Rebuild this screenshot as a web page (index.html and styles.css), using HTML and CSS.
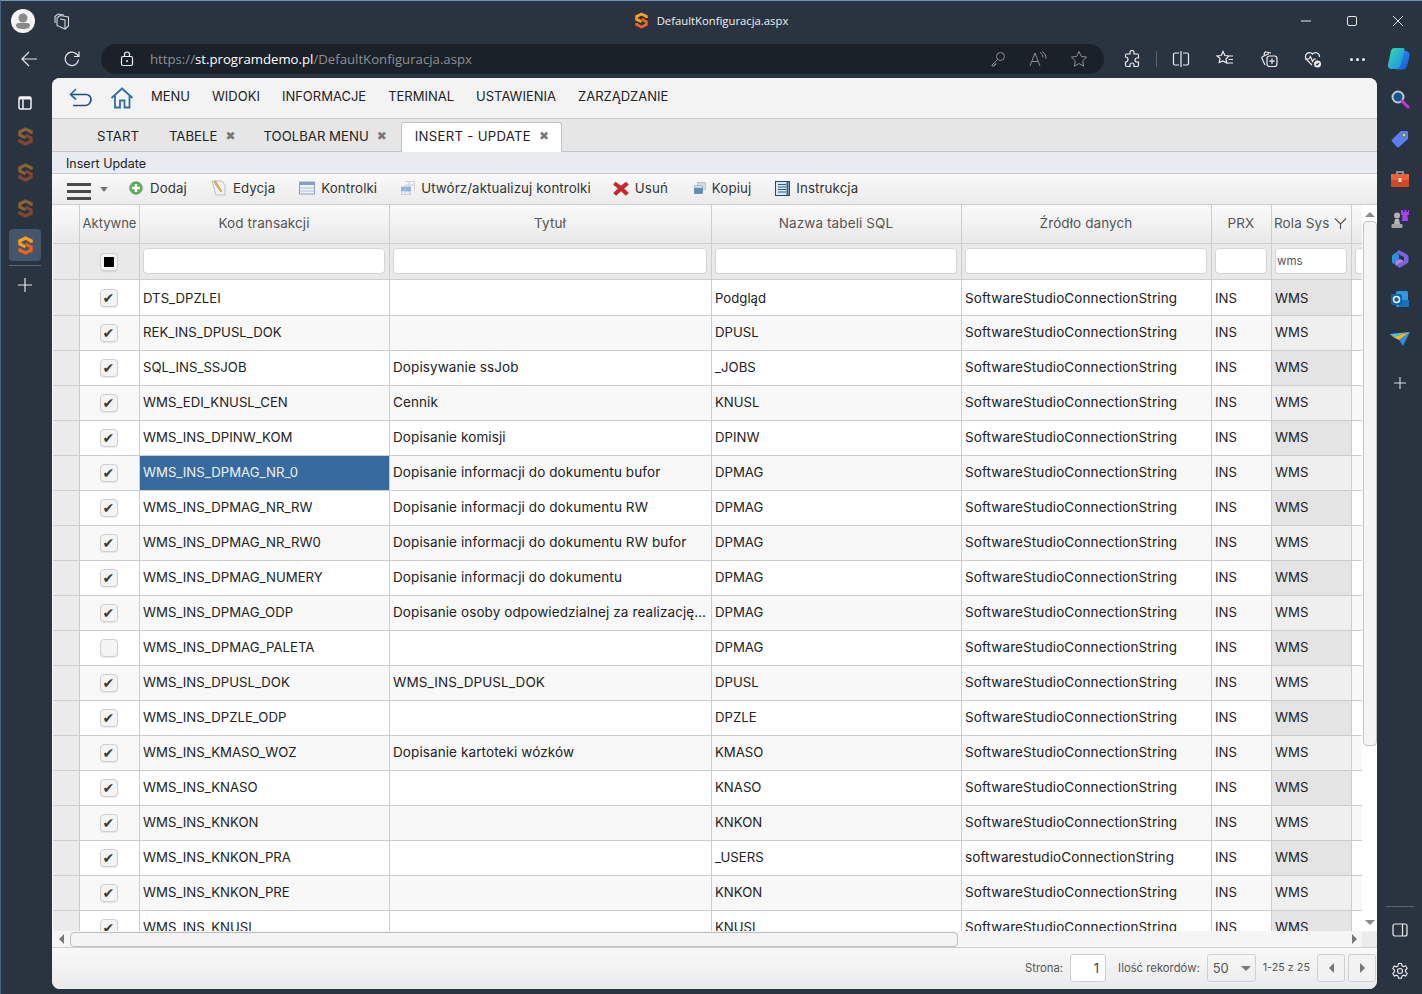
FILE: index.html
```html
<!DOCTYPE html>
<html lang="pl">
<head>
    <meta charset="UTF-8">
    <title>DefaultKonfiguracja.aspx</title>
    <link rel="stylesheet" href="styles.css">
</head>
<body>
    <svg class="defs" width="0" height="0">
        <symbol id="logo" viewBox="0 0 16 20">
            <path d="M14 7V5L8 2 2 5v3.500l6 3" fill="none" stroke="#f7a01d" stroke-width="3.400"/>
            <path d="M2 13v2l6 3 6-3v-3.500l-6-3" fill="none" stroke="#f0601f" stroke-width="3.400"/>
        </symbol>
    </svg>

    <div class="titlebar">
        <div class="title-left">
            <span class="avatar">
                <svg width="32" height="32" viewBox="0 0 32 32"><circle cx="16" cy="16" r="12" fill="#f4f4f4"/><circle cx="16" cy="13" r="4.500" fill="#8a8a8a"/><path d="M9 20.500c0-1.500 1-2.500 2.500-2.500h9c1.500 0 2.500 1 2.500 2.500 0 2.500-3 3.500-7 3.500s-7-1-7-3.500z" fill="#8a8a8a"/></svg>
            </span>
            <svg class="workspaces" width="18" height="18" viewBox="0 0 18 18" fill="none" stroke="#d5d8dc" stroke-width="1.100"><path d="M2 11V4.500L5 2l6 1"/><path d="M4 13.500V6l3-2.500 8.500 1.500v9l-3.500 3z"/><path d="M7 7l5 1v9"/></svg>
        </div>
        <div class="title-center">
            <svg width="13" height="17"><use href="#logo"/></svg>
            <span>DefaultKonfiguracja.aspx</span>
        </div>
        <div class="win-buttons">
            <svg width="12" height="12" viewBox="0 0 12 12"><path d="M1 6h10" stroke="#e8e8e8"/></svg>
            <svg width="12" height="12" viewBox="0 0 12 12"><rect x="1.500" y="1.500" width="9" height="9" rx="1.500" fill="none" stroke="#e8e8e8"/></svg>
            <svg width="12" height="12" viewBox="0 0 12 12"><path d="M1 1l10 10M11 1 1 11" stroke="#e8e8e8"/></svg>
        </div>
    </div>

    <div class="addressrow">
        <svg class="nav-ico" width="18" height="18" viewBox="0 0 18 18" fill="none" stroke="#e6e6e6" stroke-width="1.200"><path d="M17 9H2M9 2 2 9l7 7"/></svg>
        <svg class="nav-ico refresh" width="18" height="18" viewBox="0 0 18 18" fill="none" stroke="#e6e6e6" stroke-width="1.200"><path d="M15.500 9.500A6.700 6.700 0 1 1 13.500 4L16 6.500"/><path d="M16 1.500v5h-5"/></svg>
        <div class="addressbar">
            <svg class="lock" width="14" height="16" viewBox="0 0 14 16" fill="none" stroke="#f0f0f0" stroke-width="1.200"><rect x="1.500" y="5.500" width="11" height="9" rx="1.500"/><path d="M4.500 5.500V3.500a2.500 2.500 0 0 1 5 0v2"/><circle cx="7" cy="10" r="1" fill="#f0f0f0" stroke="none"/></svg>
            <span class="url"><span class="dim">https://</span>st.programdemo.pl<span class="dim">/DefaultKonfiguracja.aspx</span></span>
            <span class="addr-icons">
                <svg width="16" height="16" viewBox="0 0 16 16" fill="none" stroke="#8b8f94"><circle cx="10.500" cy="5.500" r="4"/><path d="M7.500 8.500 2 14v1h2.500v-1.500H6V12"/></svg>
                <svg width="18" height="16" viewBox="0 0 18 16" fill="none" stroke="#8b8f94"><path d="M1 15 6 2l5 13M3 10.500h6"/><path d="M11 1.500c2 1 3 2.500 3 5M13 .5c2.500 1.300 4 3.500 4 7"/></svg>
                <svg width="18" height="18" viewBox="0 0 18 18" fill="none" stroke="#8b8f94"><path d="M9 1.500l2.300 4.900 5.200.7-3.800 3.700.9 5.300L9 13.500l-4.600 2.600.9-5.300L1.500 7.100l5.200-.7z"/></svg>
            </span>
        </div>
        <div class="browser-tools">
            <svg width="18" height="18" viewBox="0 0 18 18" fill="none" stroke="#eee" stroke-width="1.200"><path d="M7 2.500a2 2 0 0 1 4 0V4h3.500a1 1 0 0 1 1 1v3H14a2 2 0 0 0 0 4h1.500v3a1.500 1.500 0 0 1-1.500 1.500h-3V15a2 2 0 0 0-4 0v1.500H4A1.500 1.500 0 0 1 2.500 15v-3a2.500 2.500 0 0 0 0-5V5a1 1 0 0 1 1-1H7z"/></svg>
            <span class="tool-sep"></span>
            <svg width="18" height="18" viewBox="0 0 18 18" fill="none" stroke="#eee" stroke-width="1.200"><path d="M7 3H3a1.500 1.500 0 0 0-1.500 1.500v9A1.500 1.500 0 0 0 3 15h4M11 3h4a1.500 1.500 0 0 1 1.500 1.500v9A1.500 1.500 0 0 1 15 15h-4M9 1v16"/></svg>
            <svg width="18" height="18" viewBox="0 0 18 18" fill="none" stroke="#eee" stroke-width="1.200"><path d="M7 1.500l1.800 4 4.200.5-3 2.900.8 4.200L7 10.900l-3.800 1.700.8-4.200L1 6l4.200-.5zM12 6h5M12.500 9.500H17M11.500 13H17"/></svg>
            <svg width="18" height="18" viewBox="0 0 18 18" fill="none" stroke="#eee" stroke-width="1.200"><path d="M5 15 2 8.500a1.500 1.500 0 0 1 .8-2L9 3.500"/><path d="M4 5 4.500 3a1.500 1.500 0 0 1 1.800-1L11 3"/><rect x="7" y="6" width="10" height="10.500" rx="2.500"/><path d="M12 8.500v5.500M9.300 11.200h5.400"/></svg>
            <svg width="18" height="18" viewBox="0 0 18 18" fill="none" stroke="#eee" stroke-width="1.200"><path d="M8 15 2.500 9.500a4 4 0 0 1 6-5.500 4 4 0 0 1 7 3"/><path d="M1 9h4l1.500-2.500 2 5L10 9h2"/><circle cx="13.500" cy="14" r="3.500" fill="#eee" stroke="none"/><path d="M12 14l1 1 2-2" stroke="#2a3442"/></svg>
            <span class="more"><i></i><i></i><i></i></span>
            <svg class="copilot" width="24" height="24" viewBox="0 0 24 24"><defs><linearGradient id="cpa" x1="0" y1="0" x2="1" y2="1"><stop offset="0" stop-color="#35dcae"/><stop offset="1" stop-color="#1a8ae8"/></linearGradient><linearGradient id="cpb" x1="0" y1="0" x2="1" y2="1"><stop offset="0" stop-color="#2a9df4"/><stop offset="1" stop-color="#1555d0"/></linearGradient></defs><path d="M15 4h3c3 0 5 2 4.500 5l-2 9c-.5 2.500-2 4.500-5 4.500h-7c2 0 3-1.500 3.500-3z" fill="url(#cpb)"/><path d="M7 1h9c1.500 0 2 1 1.500 2L13 19c-.5 2-2 3-4 3H5c-3 0-4.500-2-4-4.500L3.500 6C4 3 5 1 7 1z" fill="url(#cpa)"/></svg>
        </div>
    </div>

    <div class="main">
        <aside class="leftrail">
            <svg class="rail-ico" width="16" height="16" viewBox="0 0 16 16" fill="none" stroke="#f2f2f2" stroke-width="1.500"><rect x="2" y="2" width="12" height="12" rx="1.500"/><path d="M6 4.500V14"/><path d="M2 2h12v2.500H2z" fill="#f2f2f2" stroke="none"/></svg>
            <svg class="rail-logo dim-logo" width="15" height="19"><use href="#logo"/></svg>
            <svg class="rail-logo dim-logo" width="15" height="19"><use href="#logo"/></svg>
            <svg class="rail-logo dim-logo" width="15" height="19"><use href="#logo"/></svg>
            <span class="rail-active"><svg width="15" height="19"><use href="#logo"/></svg></span>
            <span class="rail-sep"></span>
            <svg class="rail-plus" width="16" height="16" viewBox="0 0 16 16"><path d="M8 1v14M1 8h14" stroke="#e6e6e6" stroke-width="1.200"/></svg>
        </aside>

        <div class="card">
            <nav class="menubar">
                <svg class="back-ico" width="24" height="20" viewBox="0 0 24 20" fill="none" stroke="#2f6ea5" stroke-width="1.700"><path d="M7 1 1.500 6.500 7 11.500"/><path d="M2 6.500h15a5 5 0 0 1 5 5v0a6 6 0 0 1-6 6H4" stroke="#1f4f7d"/></svg>
                <svg class="home-ico" width="24" height="22" viewBox="0 0 24 22" fill="none" stroke="#2f6ea5" stroke-width="1.800"><path d="M1.500 11 12 1.500 22.500 11M5 8.500V20.500h5v-7h4.500v7H19.500V8.500"/></svg>
                <a>MENU</a><a>WIDOKI</a><a>INFORMACJE</a><a>TERMINAL</a><a>USTAWIENIA</a><a>ZARZĄDZANIE</a>
            </nav>

            <div class="tabs">
                <span class="tab tab-start">START</span>
                <span class="tab">TABELE <b class="x">✖</b></span>
                <span class="tab">TOOLBAR MENU <b class="x">✖</b></span>
                <span class="tab active">INSERT - UPDATE <b class="x">✖</b></span>
            </div>

            <div class="crumb">Insert Update</div>

            <div class="toolbar">
                <span class="burger"><i></i><i></i><i></i></span>
                <span class="caret"></span>
                <button class="tool tool-add"><svg width="14" height="14" viewBox="0 0 14 14"><circle cx="7" cy="7" r="6.500" fill="#62ad5c" stroke="#8a9c88" stroke-width=".6"/><path d="M7 3v8M3 7h8" stroke="#fff" stroke-width="2.400"/></svg>Dodaj</button>
                <button class="tool"><svg width="16" height="16" viewBox="0 0 16 16"><path d="M1 1h10l3 4v10H5z" fill="#f1f3f5" stroke="#a9b2b8" stroke-width=".8"/><path d="M3 2l6 9 1.500 1-.3-2L4.500 1z" fill="#e9b93c" stroke="#a0782a" stroke-width=".5"/></svg>Edycja</button>
                <button class="tool"><svg width="16" height="14" viewBox="0 0 16 14"><rect x=".5" y="1" width="15" height="12" fill="#eef3f8" stroke="#8ba3bc"/><rect x=".5" y="1" width="15" height="3" fill="#7fa1c8"/><path d="M1 7h14M1 10h14" stroke="#a9c0da"/></svg>Kontrolki</button>
                <button class="tool tool-gen"><svg width="14" height="14" viewBox="0 0 14 14" fill="none" stroke="#c0ccd8" stroke-width=".8"><path d="M4 .5h9.500V10M4 4h9.500M8 .5V13M.5 7h9"/><rect x=".5" y="6" width="9" height="4" fill="#8fb2e0" stroke="#8fb2e0"/><path d="M.5 10v3.500h9V10M4 4v9.500"/></svg>Utwórz/aktualizuj kontrolki</button>
                <button class="tool tool-del"><svg width="16" height="15" viewBox="0 0 16 15"><path d="M2.500 1 8 5l5-4 2.500 2.500L11 7.500l4.500 4.500-2.500 2.500L8 10l-5 4.500L.5 12 5 7.500.5 3.500z" fill="#d3232a" stroke="#8f1d1d" stroke-width=".4"/></svg>Usuń</button>
                <button class="tool"><svg width="12" height="12" viewBox="0 0 12 12"><rect x="3.500" y=".5" width="8" height="7" fill="#d5dde6" stroke="#9fb0c0" stroke-width=".6"/><rect x=".5" y="4" width="8" height="7.500" fill="#5d8fb8" stroke="#4a7396" stroke-width=".6"/><rect x=".5" y="4" width="8" height="2" fill="#c8d8e6"/></svg>Kopiuj</button>
                <button class="tool"><svg width="15" height="15" viewBox="0 0 15 15"><rect x=".5" y=".5" width="14" height="14" fill="#dbe6f0" stroke="#1f4c6e"/><path d="M3 3.500h8M3 6h8M3 8.500h8M3 11h8" stroke="#2d5f86"/><path d="M12.500 1v13" stroke="#2d5f86" stroke-width="2"/></svg>Instrukcja</button>
            </div>

            <div class="gridarea">
                <div class="gridview">
                    <table class="grid">
                        <colgroup>
                            <col class="c-ind"><col class="c-act"><col class="c-kod"><col class="c-tyt"><col class="c-tab"><col class="c-zrd"><col class="c-prx"><col class="c-rol"><col class="c-ext">
                        </colgroup>
                        <thead>
                            <tr class="head">
                                <th></th><th class="nowrap">Aktywne</th><th>Kod transakcji</th><th>Tytuł</th><th>Nazwa tabeli SQL</th><th>Źródło danych</th><th>PRX</th>
                                <th class="rola"><span>Rola Sys</span><svg width="13" height="13" viewBox="0 0 13 13" fill="none" stroke="#555" stroke-width="1.200"><path d="M1 1.500 6.500 7 12 1.500M6.500 7v5"/></svg></th>
                                <th></th>
                            </tr>
                            <tr class="filter">
                                <td></td>
                                <td class="cc"><span class="chk chk-some"><i></i></span></td>
                                <td><input type="text"></td><td><input type="text"></td><td><input type="text"></td><td><input type="text"></td><td><input type="text"></td>
                                <td><input type="text" value="wms"></td>
                                <td><input type="text"></td>
                            </tr>
                        </thead>
                        <tbody>
                            <tr><td class="ind"></td><td class="cc"><span class="chk">✔</span></td><td>DTS_DPZLEI</td><td></td><td>Podgląd</td><td>SoftwareStudioConnectionString</td><td>INS</td><td class="ro">WMS</td><td></td></tr>
                            <tr><td class="ind"></td><td class="cc"><span class="chk">✔</span></td><td>REK_INS_DPUSL_DOK</td><td></td><td>DPUSL</td><td>SoftwareStudioConnectionString</td><td>INS</td><td class="ro">WMS</td><td></td></tr>
                            <tr><td class="ind"></td><td class="cc"><span class="chk">✔</span></td><td>SQL_INS_SSJOB</td><td>Dopisywanie ssJob</td><td>_JOBS</td><td>SoftwareStudioConnectionString</td><td>INS</td><td class="ro">WMS</td><td></td></tr>
                            <tr><td class="ind"></td><td class="cc"><span class="chk">✔</span></td><td>WMS_EDI_KNUSL_CEN</td><td>Cennik</td><td>KNUSL</td><td>SoftwareStudioConnectionString</td><td>INS</td><td class="ro">WMS</td><td></td></tr>
                            <tr><td class="ind"></td><td class="cc"><span class="chk">✔</span></td><td>WMS_INS_DPINW_KOM</td><td>Dopisanie komisji</td><td>DPINW</td><td>SoftwareStudioConnectionString</td><td>INS</td><td class="ro">WMS</td><td></td></tr>
                            <tr><td class="ind"></td><td class="cc"><span class="chk">✔</span></td><td class="selected">WMS_INS_DPMAG_NR_0</td><td>Dopisanie informacji do dokumentu bufor</td><td>DPMAG</td><td>SoftwareStudioConnectionString</td><td>INS</td><td class="ro">WMS</td><td></td></tr>
                            <tr><td class="ind"></td><td class="cc"><span class="chk">✔</span></td><td>WMS_INS_DPMAG_NR_RW</td><td>Dopisanie informacji do dokumentu RW</td><td>DPMAG</td><td>SoftwareStudioConnectionString</td><td>INS</td><td class="ro">WMS</td><td></td></tr>
                            <tr><td class="ind"></td><td class="cc"><span class="chk">✔</span></td><td>WMS_INS_DPMAG_NR_RW0</td><td>Dopisanie informacji do dokumentu RW bufor</td><td>DPMAG</td><td>SoftwareStudioConnectionString</td><td>INS</td><td class="ro">WMS</td><td></td></tr>
                            <tr><td class="ind"></td><td class="cc"><span class="chk">✔</span></td><td>WMS_INS_DPMAG_NUMERY</td><td>Dopisanie informacji do dokumentu</td><td>DPMAG</td><td>SoftwareStudioConnectionString</td><td>INS</td><td class="ro">WMS</td><td></td></tr>
                            <tr><td class="ind"></td><td class="cc"><span class="chk">✔</span></td><td>WMS_INS_DPMAG_ODP</td><td>Dopisanie osoby odpowiedzialnej za realizację zlecenia</td><td>DPMAG</td><td>SoftwareStudioConnectionString</td><td>INS</td><td class="ro">WMS</td><td></td></tr>
                            <tr><td class="ind"></td><td class="cc"><span class="chk"></span></td><td>WMS_INS_DPMAG_PALETA</td><td></td><td>DPMAG</td><td>SoftwareStudioConnectionString</td><td>INS</td><td class="ro">WMS</td><td></td></tr>
                            <tr><td class="ind"></td><td class="cc"><span class="chk">✔</span></td><td>WMS_INS_DPUSL_DOK</td><td>WMS_INS_DPUSL_DOK</td><td>DPUSL</td><td>SoftwareStudioConnectionString</td><td>INS</td><td class="ro">WMS</td><td></td></tr>
                            <tr><td class="ind"></td><td class="cc"><span class="chk">✔</span></td><td>WMS_INS_DPZLE_ODP</td><td></td><td>DPZLE</td><td>SoftwareStudioConnectionString</td><td>INS</td><td class="ro">WMS</td><td></td></tr>
                            <tr><td class="ind"></td><td class="cc"><span class="chk">✔</span></td><td>WMS_INS_KMASO_WOZ</td><td>Dopisanie kartoteki wózków</td><td>KMASO</td><td>SoftwareStudioConnectionString</td><td>INS</td><td class="ro">WMS</td><td></td></tr>
                            <tr><td class="ind"></td><td class="cc"><span class="chk">✔</span></td><td>WMS_INS_KNASO</td><td></td><td>KNASO</td><td>SoftwareStudioConnectionString</td><td>INS</td><td class="ro">WMS</td><td></td></tr>
                            <tr><td class="ind"></td><td class="cc"><span class="chk">✔</span></td><td>WMS_INS_KNKON</td><td></td><td>KNKON</td><td>SoftwareStudioConnectionString</td><td>INS</td><td class="ro">WMS</td><td></td></tr>
                            <tr><td class="ind"></td><td class="cc"><span class="chk">✔</span></td><td>WMS_INS_KNKON_PRA</td><td></td><td>_USERS</td><td>softwarestudioConnectionString</td><td>INS</td><td class="ro">WMS</td><td></td></tr>
                            <tr><td class="ind"></td><td class="cc"><span class="chk">✔</span></td><td>WMS_INS_KNKON_PRE</td><td></td><td>KNKON</td><td>SoftwareStudioConnectionString</td><td>INS</td><td class="ro">WMS</td><td></td></tr>
                            <tr><td class="ind"></td><td class="cc"><span class="chk">✔</span></td><td>WMS_INS_KNUSL</td><td></td><td>KNUSL</td><td>SoftwareStudioConnectionString</td><td>INS</td><td class="ro">WMS</td><td></td></tr>
                        </tbody>
                    </table>
                </div>
                <div class="vscroll">
                    <span class="arrow-up"></span>
                    <span class="vthumb"></span>
                    <span class="arrow-down"></span>
                </div>
            </div>

            <div class="hscroll">
                <span class="arrow-left"></span>
                <span class="hthumb"></span>
                <span class="arrow-right"></span>
                <span class="corner"></span>
            </div>

            <div class="pager">
                <label>Strona:</label>
                <input class="page-input" type="text" value="1">
                <label class="recs">Ilość rekordów:</label>
                <span class="page-size">50<i></i></span>
                <span class="range">1-25 z 25</span>
                <button class="page-btn"><span class="arrow-left"></span></button>
                <button class="page-btn"><span class="arrow-right"></span></button>
            </div>
        </div>

        <aside class="rightrail">
            <svg width="20" height="20" viewBox="0 0 20 20" fill="none"><circle cx="8" cy="8" r="5.500" fill="#14568f" stroke="#bfc6cc" stroke-width="2"/><path d="M12 12l6 6" stroke="#c238d8" stroke-width="3" stroke-linecap="round"/></svg>
            <svg width="20" height="20" viewBox="0 0 20 20"><path d="M11 2h6a1 1 0 0 1 1 1v7l-9 8a1.500 1.500 0 0 1-2 0L2 12.500a1.500 1.500 0 0 1 0-2z" fill="#5b7ff0"/><circle cx="14" cy="6" r="1.800" fill="#f5d33f" stroke="#3050a0" stroke-width=".5"/></svg>
            <svg width="20" height="20" viewBox="0 -1 20 20"><path d="M7 4V2h6v2" fill="none" stroke="#a9aeb3" stroke-width="1.500"/><rect x="1" y="4" width="18" height="6" fill="#e8613a"/><rect x="1" y="10" width="18" height="7" fill="#cf4a2b"/><rect x="8.500" y="8" width="3" height="4" fill="#e6d9c8"/></svg>
            <svg width="20" height="20" viewBox="0 0 20 20"><circle cx="7" cy="6.500" r="3" fill="#b5b5b5"/><path d="M5 10h4l1 5H4z" fill="#b5b5b5"/><rect x="1.500" y="15" width="11" height="4" rx="1" fill="#a3a3a3"/><path d="M11 1h2v2h1.500V1h2v2H18V1h1v5h-1.500l.5 6h-6l.5-6H11z" fill="#a63ff0"/></svg>
            <svg width="20" height="20" viewBox="0 0 20 20"><path d="M9 1 17 5.500c1 .6 1.500 1.200 1.500 2.500v4c0 1.300-.5 2-1.500 2.500L9.500 19 6 16.500 14 12V8L6 4z" fill="#7a62e0"/><path d="M2 6.500 9 1 6 4 9 6v8l-3 2.500-4-3z" fill="#2d8fe0"/><path d="M6 16.500 14 12l-4-2-4 2z" fill="#c67be0"/></svg>
            <svg width="20" height="20" viewBox="0 0 20 20"><rect x="6" y="2" width="12" height="16" rx="1.500" fill="#2b9ae0"/><path d="M9 11h10v7H9z" fill="#1a6fc0"/><rect x="1" y="5" width="11" height="11" rx="1.500" fill="#0f62b0"/><circle cx="6.500" cy="10.500" r="3" fill="none" stroke="#fff" stroke-width="1.500"/></svg>
            <svg width="20" height="20" viewBox="0 -2 20 20"><path d="M9 9 20 1 13 15z" fill="#2b8fe8"/><path d="M0 3 20 1 3 6z" fill="#4cc0f5"/><path d="M3 6 20 1 9 9z" fill="#f5b81f"/></svg>
            <svg class="rail-plus" width="14" height="14" viewBox="0 0 14 14"><path d="M7 1v12M1 7h12" stroke="#d9dcdf" stroke-width="1.100"/></svg>
            <span class="right-spacer"></span>
            <span class="rail-sep wide"></span>
            <svg class="r-sidebar" width="16" height="14" viewBox="0 0 16 14" fill="none" stroke="#eee" stroke-width="1.200"><rect x="1" y="1" width="14" height="12" rx="2"/><path d="M10.500 1v12"/></svg>
            <svg class="r-gear" width="18" height="18" viewBox="0 0 18 18" fill="none" stroke="#eee" stroke-width="1.100"><circle cx="9" cy="9" r="2.500"/><path d="M7.500 1.500h3l.5 2.300 1.500.8 2.200-.8 1.500 2.600-1.700 1.600v1.800l1.700 1.600-1.500 2.600-2.200-.8-1.500.8-.5 2.300h-3l-.5-2.300-1.500-.8-2.200.8-1.500-2.600 1.700-1.600V8.200L1.800 6.600l1.500-2.600 2.200.8L7 4z"/></svg>
        </aside>
    </div>
</body>
</html>
```

FILE: styles.css
```css
* {
    box-sizing: border-box;
}
html, body {
    margin: 0;
    height: 994px;
    overflow: hidden;
}
body {
    display: flex;
    flex-direction: column;
    background-color: #2a3441;
    border-top: 1px solid #6d93b5;
    border-left: 1px solid #48657f;
    font-family: "Inter", "Liberation Sans", sans-serif;
    font-size: 13.5px;
    letter-spacing: .1px;
    color: #222;
}
.defs {
    position: absolute;
}

/* browser chrome */
.titlebar {
    height: 39px;
    flex: none;
    display: grid;
    grid-template-columns: 1fr auto 1fr;
    align-items: center;
}
.title-left {
    display: flex;
    align-items: center;
    padding-left: 6px;
    gap: 14px;
}
.avatar {
    width: 32px;
    height: 32px;
}
.title-center {
    display: flex;
    align-items: center;
    gap: 9px;
    color: #eef0f2;
    font-family: "Open Sans", sans-serif;
    font-size: 11.300px;
    letter-spacing: 0;
}
.win-buttons {
    display: flex;
    justify-content: flex-end;
    gap: 34px;
    padding-right: 18px;
}
.addressrow {
    height: 38px;
    flex: none;
    display: flex;
    align-items: center;
    padding-left: 19px;
}
.nav-ico.refresh {
    margin-left: 25px;
}
.addressbar {
    width: 1003px;
    height: 30px;
    margin-left: 20px;
    border-radius: 15px;
    background-color: #1b2129;
    display: flex;
    align-items: center;
    padding-left: 19px;
    padding-right: 16px;
}
.url {
    margin-left: 16px;
    color: #fff;
    font-family: "Open Sans", sans-serif;
    font-size: 13.200px;
    letter-spacing: 0;
}
.url .dim {
    color: #8d9094;
}
.addr-icons {
    margin-left: auto;
    display: flex;
    align-items: center;
    gap: 23px;
}
.browser-tools {
    display: flex;
    align-items: center;
    gap: 26px;
    margin-left: 19px;
}
.tool-sep {
    width: 1px;
    height: 16px;
    background-color: #596370;
    margin: 0 -11px;
}
.more {
    display: flex;
    gap: 3px;
    margin-left: 2px;
}
.more i {
    width: 3px;
    height: 3px;
    border-radius: 50%;
    background-color: #eee;
}
.copilot {
    margin-left: -4px;
}

.main {
    flex: 1;
    display: flex;
    min-height: 0;
    padding-bottom: 5px;
}
.leftrail {
    width: 52px;
    margin-left: -1px;
    padding-right: 2px;
    flex: none;
    display: flex;
    flex-direction: column;
    align-items: center;
    padding-top: 17px;
}
.rail-logo {
    margin-top: 17px;
}
.rail-ico + .rail-logo {
    margin-top: 16px;
}
.dim-logo {
    opacity: .45;
}
.rail-active {
    width: 32px;
    height: 32px;
    margin-top: 11px;
    border-radius: 4px;
    background-color: #46566a;
    display: flex;
    align-items: center;
    justify-content: center;
}
.rail-sep {
    width: 32px;
    height: 1px;
    margin-top: 4px;
    background-color: #5a6572;
}
.rail-plus {
    margin-top: 11px;
}

.rightrail {
    width: 45px;
    flex: none;
    display: flex;
    flex-direction: column;
    align-items: center;
    gap: 20px;
    padding-top: 11px;
}
.rightrail .rail-plus {
    margin-top: 7px;
}
.right-spacer {
    flex: 1;
}
.rail-sep.wide {
    width: 28px;
    margin-top: 0;
    margin-bottom: -4px;
}
.r-gear {
    margin-top: 5px;
    margin-bottom: 9px;
}

/* page */
.card {
    width: 1325px;
    flex: none;
    display: flex;
    flex-direction: column;
    min-height: 0;
    background-color: #f2f2f2;
    border-radius: 8px;
    overflow: hidden;
}
.menubar {
    height: 41px;
    flex: none;
    display: flex;
    align-items: center;
    padding-left: 17px;
    border-bottom: 1px solid #c9c9c9;
    font-size: 13px;
    letter-spacing: 0;
    background-color: #f3f3f3;
}
.menubar a {
    margin-right: 22px;
    margin-top: -5px;
    color: #222;
}
.home-ico {
    margin-left: 17px;
    margin-right: 17px;
}
.tabs {
    height: 33px;
    flex: none;
    display: flex;
    align-items: flex-end;
    background-color: #e6e6e6;
    border-bottom: 1px solid #c4c4c4;
    padding-left: 30px;
    font-size: 13.200px;
    letter-spacing: 0;
}
.tab {
    height: 30px;
    padding: 0 14px;
    display: flex;
    align-items: center;
    gap: 8px;
    color: #222;
}
.tab-start {
    padding-left: 15px;
    padding-right: 16px;
}
.tab .x {
    color: #777;
    font-size: 12px;
    font-family: "DejaVu Sans", sans-serif;
}
.tab.active {
    background-color: #fff;
    border: 1px solid #c4c4c4;
    border-bottom: none;
    border-radius: 3px 3px 0 0;
    padding: 0 12px 3px 13px;
    margin-bottom: -1px;
    letter-spacing: .28px;
}
.crumb {
    height: 22px;
    flex: none;
    display: flex;
    align-items: center;
    padding: 1px 0 0 14px;
    background-color: #e8ebf0;
    border-bottom: 1px solid #c9c9c9;
    font-size: 12.500px;
    letter-spacing: 0;
}
.toolbar {
    height: 31px;
    flex: none;
    display: flex;
    align-items: center;
    padding-left: 15px;
    background: linear-gradient(#fafafa, #ebebeb);
    border-bottom: 1px solid #cfcfcf;
}
.burger {
    width: 24px;
    display: flex;
    flex-direction: column;
    gap: 4px;
    margin-top: 4px;
}
.burger i {
    height: 3px;
    background-color: #4a4a4a;
}
.caret {
    margin-left: 9px;
    margin-right: 21px;
    border-left: 4.500px solid transparent;
    border-right: 4.500px solid transparent;
    border-top: 5px solid #777;
}
.tool {
    display: flex;
    align-items: center;
    gap: 6px;
    border: none;
    padding: 0 0 2px;
    margin-right: 24px;
    background: none;
    font: inherit;
    font-size: 13.300px;
    letter-spacing: .1px;
    color: #333;
}
.tool-add {
    gap: 7px;
}
.tool-gen {
    margin-right: 22px;
}
.tool-del {
    margin-right: 26px;
}

.gridarea {
    flex: 1;
    min-height: 0;
    display: flex;
    background-color: #fff;
}
.gridview {
    width: 1310px;
    flex: none;
    overflow: hidden;
    padding-left: 1px;
    background-color: #fff;
}
.grid {
    width: 1379px;
    table-layout: fixed;
    border-collapse: separate;
    border-spacing: 0;
}
.c-ind { width: 27px; }
.c-act { width: 60px; }
.c-kod { width: 250px; }
.c-tyt { width: 322px; }
.c-tab { width: 250px; }
.c-zrd { width: 250px; }
.c-prx { width: 60px; }
.c-rol { width: 80px; }
.c-ext { width: 80px; }
.grid th, .grid td {
    border-right: 1px solid #cdcdcd;
    border-bottom: 1px solid #cdcdcd;
    padding: 0 3px 0 2px;
    white-space: nowrap;
    overflow: hidden;
    text-overflow: ellipsis;
}
.grid .head th {
    height: 39px;
    padding-bottom: 2px;
    background: linear-gradient(#fafafa, #e9e9e9);
    font-weight: 400;
    color: #555;
}
.grid .head .nowrap {
    padding: 0 1px 2px;
    font-size: 13px;
    letter-spacing: 0;
}
.head .rola {
    text-align: left;
}
.head .rola svg {
    float: right;
    margin-top: 2px;
    margin-right: 1px;
}
.grid .filter td {
    height: 36px;
    background-color: #e9e9e9;
    padding: 0 4px 1px 3px;
}
.grid .filter td.cc {
    padding: 0 4px 0 2px;
}
.filter input {
    width: 100%;
    height: 26px;
    border: 1px solid #d5d5d5;
    border-radius: 4px;
    background-color: #fff;
    padding: 0 1px;
    font: inherit;
    font-size: 11.500px;
    color: #555;
    display: block;
}
.grid tbody td {
    height: 35px;
    background-color: #fff;
    padding: 0 3px 2px;
}
.grid tbody tr:first-child td {
    height: 36px;
    padding-bottom: 0;
}
/* upper-case columns run narrower than the title text */
.grid tbody td:nth-child(3), .grid tbody td:nth-child(5), .grid tbody td:nth-child(7), .grid tbody td:nth-child(8) {
    font-size: 13.200px;
    letter-spacing: 0;
}
.grid tbody tr:nth-child(even) td {
    background-color: #f8f8f8;
}
.grid tbody td.ind, .grid tbody tr:nth-child(even) td.ind {
    background-color: #ebebeb;
}
.grid tbody td.ro {
    background-color: #e4e4e4;
}
.grid tbody tr:nth-child(even) td.ro {
    background-color: #efefef;
}
.grid tbody td.selected, .grid tbody tr:nth-child(even) td.selected {
    background-color: #376a9e;
    color: #f2f2f2;
}
.grid tbody td.cc {
    text-align: center;
    padding: 0 4px 0 2px;
}
.filter .cc {
    text-align: center;
}
.chk {
    display: inline-flex;
    align-items: center;
    justify-content: center;
    vertical-align: middle;
    width: 18px;
    height: 18px;
    border: 1px solid #cfcfcf;
    border-radius: 4px;
    background-color: #f4f4f4;
    box-shadow: 0 1px 1px rgba(0,0,0,0.08);
    color: #3a3a3a;
    font-family: "DejaVu Sans", sans-serif;
    font-size: 14px;
    line-height: 1;
}
.chk-some i {
    width: 10px;
    height: 10px;
    background-color: #000;
}

.vscroll {
    flex: 1;
    display: flex;
    flex-direction: column;
    align-items: center;
    background-color: #fff;
}
.vthumb {
    width: 14px;
    height: 525px;
    margin-top: 4px;
    margin-left: 1px;
    border: 1px solid #c4c4c4;
    border-radius: 4px;
    background-color: #f4f4f4;
}
.arrow-up, .arrow-down, .arrow-left, .arrow-right {
    display: inline-block;
    width: 0;
    height: 0;
    flex: none;
}
.arrow-up {
    margin-top: 7px;
    border-left: 5px solid transparent;
    border-right: 5px solid transparent;
    border-bottom: 5px solid #8a8a8a;
}
.arrow-down {
    margin-top: auto;
    margin-bottom: 6px;
    border-left: 5px solid transparent;
    border-right: 5px solid transparent;
    border-top: 5px solid #8a8a8a;
}
.arrow-left {
    border-top: 5px solid transparent;
    border-bottom: 5px solid transparent;
    border-right: 5px solid #777;
}
.arrow-right {
    border-top: 5px solid transparent;
    border-bottom: 5px solid transparent;
    border-left: 5px solid #777;
}
.hscroll {
    height: 17px;
    flex: none;
    display: flex;
    align-items: center;
    padding-left: 7px;
    background-color: #f5f5f5;
    border-bottom: 1px solid #cfcfcf;
}
.hthumb {
    width: 888px;
    height: 15px;
    margin-left: 6px;
    border: 1px solid #bdbdbd;
    border-radius: 4px;
    background-color: #f4f4f4;
}
.hscroll .arrow-right {
    margin-left: auto;
    margin-right: 5px;
}
.corner {
    width: 15px;
    height: 16px;
    background-color: #ececec;
}
.pager {
    height: 41px;
    flex: none;
    display: flex;
    align-items: center;
    justify-content: flex-end;
    padding: 0 1px 2px 0;
    background: linear-gradient(#f8f8f8, #ebebeb);
    font-size: 11.300px;
    letter-spacing: 0;
    color: #555;
}
.page-input {
    width: 36px;
    height: 28px;
    margin: 0 12px 0 7px;
    border: 1px solid #d0d0d0;
    border-radius: 3px;
    background-color: #fff;
    text-align: right;
    font: inherit;
    font-size: 13px;
    padding: 0 6px 0 3px;
    color: #444;
}
.page-size {
    width: 49px;
    height: 28px;
    margin-left: 7px;
    border: 1px solid #d0d0d0;
    border-radius: 3px;
    display: flex;
    align-items: center;
    padding-left: 5px;
    font-size: 13px;
    position: relative;
}
.page-size i {
    position: absolute;
    right: 4px;
    top: 11px;
    border-left: 5px solid transparent;
    border-right: 5px solid transparent;
    border-top: 5px solid #777;
}
.range {
    margin: 0 4px 0 7px;
    font-size: 10.800px;
}
.page-btn {
    width: 28px;
    height: 28px;
    margin-left: 3px;
    border: 1px solid #d0d0d0;
    border-radius: 3px;
    background-color: #f2f2f2;
    display: flex;
    align-items: center;
    justify-content: center;
    padding: 0;
}
```
